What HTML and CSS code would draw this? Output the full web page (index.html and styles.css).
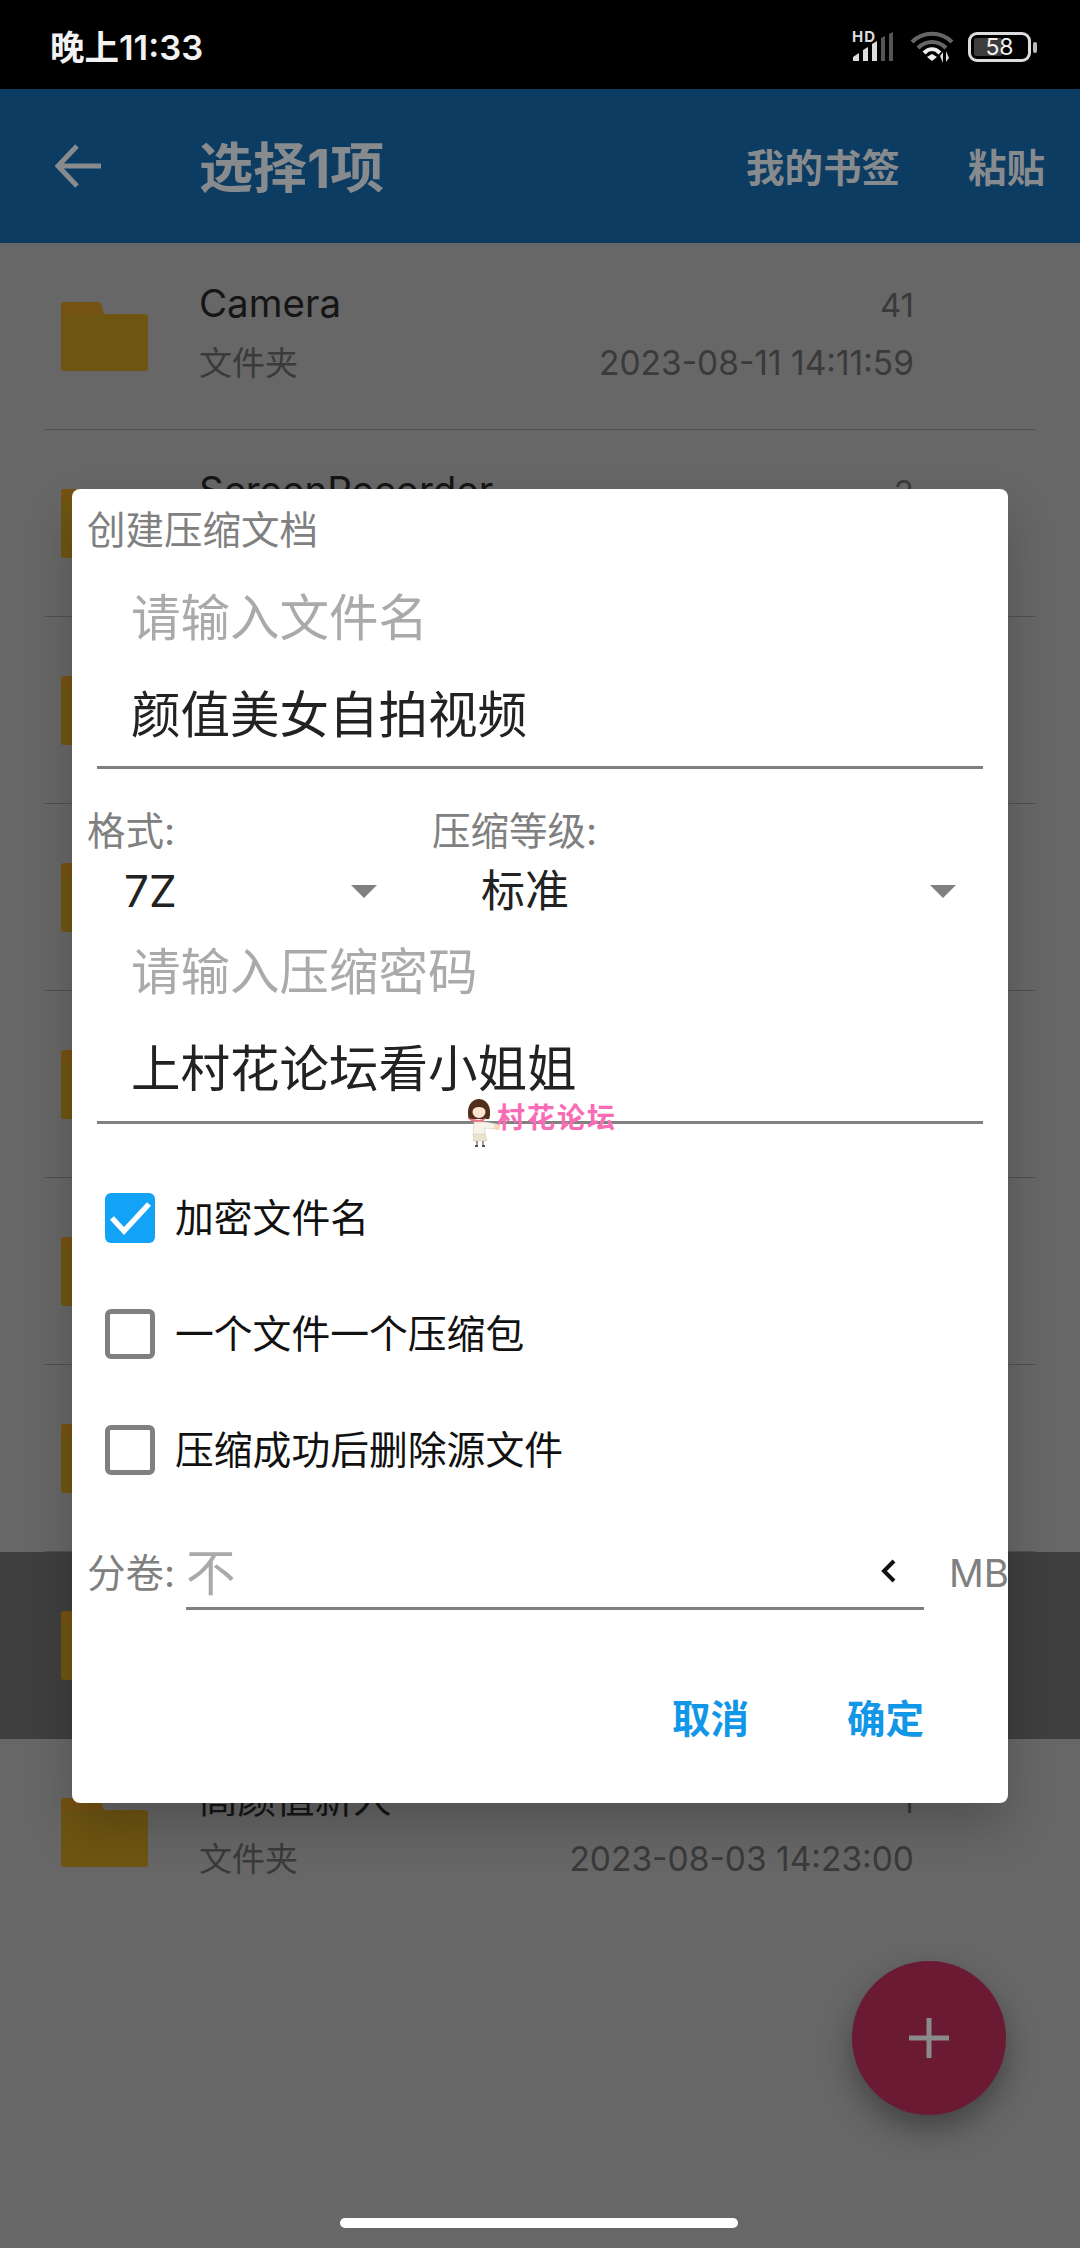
FILE: index.html
```html
<!DOCTYPE html>
<html lang="zh-CN">
<head>
<meta charset="utf-8">
<title>创建压缩文档</title>
<link rel="stylesheet" href="styles.css">
</head>
<body>
<div class="screen">
  <div class="status">
    <span class="time">晚上11:33</span>
    <div class="status-icons">
      <svg class="ic-signal" width="42" height="32" viewBox="0 0 42 32">
        <text x="0" y="11" class="hd">HD</text>
        <path d="M1 30v-4l6-4v8z" fill="#ddd"/>
        <path d="M11 30V19l5-3v14z" fill="#ddd"/>
        <path d="M20 30V13l5-3v20z" fill="#ddd"/>
        <path d="M29 30V7l4-2v25z" fill="#555"/>
        <path d="M37 30V3l4-2v29z" fill="#555"/>
      </svg>
      <svg class="ic-wifi" width="44" height="32" viewBox="0 0 44 32">
        <path d="M2 11C13 0 31 0 42 11" fill="none" stroke="#666" stroke-width="4"/>
        <path d="M8 17c8-8 20-8 28 0" fill="none" stroke="#666" stroke-width="4"/>
        <path d="M14 22c5-5 11-5 16 0" fill="none" stroke="#eee" stroke-width="4"/>
        <path d="M17 26l5-3 5 3-5 4z" fill="#eee"/>
        <path d="M33 32V21l-3 4zM36 20v11l3-4z" fill="#ddd"/>
      </svg>
      <div class="battery">
        <div class="battery-body"><span class="battery-fill"></span><span class="battery-num">58</span></div>
        <span class="battery-nub"></span>
      </div>
    </div>
  </div>

  <header class="appbar">
    <svg class="back" width="46" height="44" viewBox="0 0 46 44"><path d="M22 2L3 22l19 20M3 22h43" fill="none" stroke="#878b8e" stroke-width="5"/></svg>
    <span class="appbar-title">选择1项</span>
    <span class="appbar-action">我的书签</span>
    <span class="appbar-action appbar-action-last">粘贴</span>
  </header>

  <main class="list">
    <div class="row">
      <svg class="folder" width="87" height="69" viewBox="0 0 87 69"><path d="M0 3a3 3 0 0 1 3-3h34a3 3 0 0 1 3 2l3 10H0z" fill="#755212"/><path d="M0 12h84a3 3 0 0 1 3 3v51a3 3 0 0 1-3 3H3a3 3 0 0 1-3-3z" fill="#6e5512"/></svg>
      <div class="row-main"><div class="name">Camera</div><div class="kind">文件夹</div></div>
      <div class="row-side"><div class="count">41</div><div class="date">2023-08-11 14:11:59</div></div>
      <div class="dots"><i></i><i></i><i></i></div>
    </div>
    <div class="row">
      <svg class="folder" width="87" height="69" viewBox="0 0 87 69"><path d="M0 3a3 3 0 0 1 3-3h34a3 3 0 0 1 3 2l3 10H0z" fill="#755212"/><path d="M0 12h84a3 3 0 0 1 3 3v51a3 3 0 0 1-3 3H3a3 3 0 0 1-3-3z" fill="#6e5512"/></svg>
      <div class="row-main"><div class="name">ScreenRecorder</div><div class="kind">文件夹</div></div>
      <div class="row-side"><div class="count">2</div><div class="date"></div></div>
      <div class="dots"><i></i><i></i><i></i></div>
    </div>
    <div class="row">
      <svg class="folder" width="87" height="69" viewBox="0 0 87 69"><path d="M0 3a3 3 0 0 1 3-3h34a3 3 0 0 1 3 2l3 10H0z" fill="#755212"/><path d="M0 12h84a3 3 0 0 1 3 3v51a3 3 0 0 1-3 3H3a3 3 0 0 1-3-3z" fill="#6e5512"/></svg>
      <div class="row-main"></div><div class="row-side"></div>
      <div class="dots"><i></i><i></i><i></i></div>
    </div>
    <div class="row">
      <svg class="folder" width="87" height="69" viewBox="0 0 87 69"><path d="M0 3a3 3 0 0 1 3-3h34a3 3 0 0 1 3 2l3 10H0z" fill="#755212"/><path d="M0 12h84a3 3 0 0 1 3 3v51a3 3 0 0 1-3 3H3a3 3 0 0 1-3-3z" fill="#6e5512"/></svg>
      <div class="row-main"></div><div class="row-side"></div>
      <div class="dots"><i></i><i></i><i></i></div>
    </div>
    <div class="row">
      <svg class="folder" width="87" height="69" viewBox="0 0 87 69"><path d="M0 3a3 3 0 0 1 3-3h34a3 3 0 0 1 3 2l3 10H0z" fill="#755212"/><path d="M0 12h84a3 3 0 0 1 3 3v51a3 3 0 0 1-3 3H3a3 3 0 0 1-3-3z" fill="#6e5512"/></svg>
      <div class="row-main"></div><div class="row-side"></div>
      <div class="dots"><i></i><i></i><i></i></div>
    </div>
    <div class="row">
      <svg class="folder" width="87" height="69" viewBox="0 0 87 69"><path d="M0 3a3 3 0 0 1 3-3h34a3 3 0 0 1 3 2l3 10H0z" fill="#755212"/><path d="M0 12h84a3 3 0 0 1 3 3v51a3 3 0 0 1-3 3H3a3 3 0 0 1-3-3z" fill="#6e5512"/></svg>
      <div class="row-main"></div><div class="row-side"></div>
      <div class="dots"><i></i><i></i><i></i></div>
    </div>
    <div class="row">
      <svg class="folder" width="87" height="69" viewBox="0 0 87 69"><path d="M0 3a3 3 0 0 1 3-3h34a3 3 0 0 1 3 2l3 10H0z" fill="#755212"/><path d="M0 12h84a3 3 0 0 1 3 3v51a3 3 0 0 1-3 3H3a3 3 0 0 1-3-3z" fill="#6e5512"/></svg>
      <div class="row-main"></div><div class="row-side"></div>
      <div class="dots"><i></i><i></i><i></i></div>
    </div>
    <div class="row row-selected">
      <svg class="folder" width="87" height="69" viewBox="0 0 87 69"><path d="M0 3a3 3 0 0 1 3-3h34a3 3 0 0 1 3 2l3 10H0z" fill="#755212"/><path d="M0 12h84a3 3 0 0 1 3 3v51a3 3 0 0 1-3 3H3a3 3 0 0 1-3-3z" fill="#6e5512"/></svg>
      <div class="row-main"></div><div class="row-side"></div>
      <div class="dots"><i></i><i></i><i></i></div>
    </div>
    <div class="row row-last">
      <svg class="folder" width="87" height="69" viewBox="0 0 87 69"><path d="M0 3a3 3 0 0 1 3-3h34a3 3 0 0 1 3 2l3 10H0z" fill="#755212"/><path d="M0 12h84a3 3 0 0 1 3 3v51a3 3 0 0 1-3 3H3a3 3 0 0 1-3-3z" fill="#6e5512"/></svg>
      <div class="row-main"><div class="name">高颜值新人</div><div class="kind">文件夹</div></div>
      <div class="row-side"><div class="count">1</div><div class="date">2023-08-03 14:23:00</div></div>
      <div class="dots"><i></i><i></i><i></i></div>
    </div>
  </main>

  <button class="fab"><svg width="40" height="40" viewBox="0 0 40 40"><path d="M20 0v40M0 20h40" stroke="#8a8a8a" stroke-width="5"/></svg></button>
  <div class="home-handle"></div>

  <section class="dialog">
    <h1 class="dlg-title">创建压缩文档</h1>

    <div class="field field-name">
      <div class="ph">请输入文件名</div>
      <div class="val">颜值美女自拍视频</div>
    </div>

    <div class="formats">
      <div class="fmt fmt-a">
        <div class="fmt-label">格式:</div>
        <div class="spin"><span>7Z</span><svg width="26" height="13" viewBox="0 0 26 13"><path d="M0 0h26L13 13z" fill="#808080"/></svg></div>
      </div>
      <div class="fmt fmt-b">
        <div class="fmt-label">压缩等级:</div>
        <div class="spin"><span>标准</span><svg width="26" height="13" viewBox="0 0 26 13"><path d="M0 0h26L13 13z" fill="#808080"/></svg></div>
      </div>
    </div>

    <div class="field field-pass">
      <div class="ph">请输入压缩密码</div>
      <div class="val">上村花论坛看小姐姐</div>
      <div class="mark">
        <svg width="34" height="48" viewBox="0 0 34 48">
          <path d="M1 13C1 4 7 0 12 0s11 4 11 13c0 3 0 5-1 7H2c-1-2-1-4-1-7z" fill="#4f2f1a"/>
          <ellipse cx="12" cy="13" rx="6.500" ry="6" fill="#fbe3cf"/>
          <path d="M5 11c3-4 11-4 14 0V5l-7-3-7 3z" fill="#4f2f1a"/>
          <path d="M0 19l12 2 7-2-5 6-8-2z" fill="#ea6f80"/>
          <path d="M7 23h11l12 2v5l-12-1v8H6z" fill="#f6f3ea" stroke="#cfc8ba" stroke-width=".6"/>
          <path d="M7 35h11l2 7H6z" fill="#ece2d4" stroke="#d3c9ba" stroke-width=".5"/>
          <path d="M10 42v4M16 42v4" stroke="#8b7a6c" stroke-width="1.500"/>
          <path d="M8 46h3v2H8zM15 46h3v2h-3z" fill="#5a4a40"/>
          <rect x="27" y="25" width="6" height="6" rx="2" fill="#f5d9bd"/>
        </svg>
        <span>村花论坛</span>
      </div>
    </div>

    <div class="checks">
      <label class="check"><span class="box box-on"><svg width="50" height="50" viewBox="0 0 50 50"><path d="M7 25l12 13L44 11" fill="none" stroke="#fff" stroke-width="5.500"/></svg></span><span class="check-text">加密文件名</span></label>
      <label class="check"><span class="box"></span><span class="check-text">一个文件一个压缩包</span></label>
      <label class="check"><span class="box"></span><span class="check-text">压缩成功后删除源文件</span></label>
    </div>

    <div class="split">
      <span class="split-label">分卷:</span>
      <div class="split-input">
        <span class="split-val">不</span>
        <svg class="split-chev" width="16" height="24" viewBox="0 0 16 24"><path d="M13 2L3 12l10 10" fill="none" stroke="#111" stroke-width="4"/></svg>
      </div>
      <span class="split-unit">MB</span>
    </div>

    <div class="actions">
      <span class="act">取消</span>
      <span class="act">确定</span>
    </div>
  </section>
</div>
</body>
</html>
```

FILE: styles.css
```css
* { box-sizing: border-box; }
html, body { margin: 0; padding: 0; }
body {
  width: 1080px;
  height: 2248px;
  overflow: hidden;
  font-family: "Inter", "Noto Sans CJK SC", sans-serif;
  background: #676767;
}
.screen { position: relative; width: 1080px; height: 2248px; overflow: hidden; background: #676767; }

.status {
  height: 89px;
  background: #000;
  display: flex;
  align-items: center;
  justify-content: space-between;
  padding: 0 43px 0 50px;
}
.time { color: #f2f2f2; font-size: 34.500px; font-weight: 600; line-height: 40px; margin-top: 6px; white-space: nowrap; }
.status-icons { display: flex; align-items: center; margin-top: 5px; }
.ic-signal { display: block; margin-right: 16px; overflow: visible; }
.hd { font: 700 15px "Inter", sans-serif; fill: #ddd; letter-spacing: 1px; }
.ic-wifi { display: block; margin-right: 14px; }
.battery { display: flex; align-items: center; gap: 2px; }
.battery-body {
  position: relative;
  width: 63px;
  height: 30px;
  border: 3.500px solid #dcdcdc;
  border-radius: 9px;
  display: flex;
  align-items: center;
  justify-content: center;
}
.battery-fill { position: absolute; left: 3px; top: 3px; bottom: 3px; width: 28px; background: #3d3d3d; border-radius: 2px; }
.battery-num { position: relative; color: #f2f2f2; font-size: 23px; line-height: 24px; }
.battery-nub { width: 4px; height: 11px; background: #bbb; border-radius: 2px; }

.appbar {
  height: 154px;
  background: #0d3c63;
  display: flex;
  align-items: center;
  padding: 0 35px 0 55px;
  color: #878b8e;
}
.back { flex: none; margin-right: 98px; }
.appbar-title { font-size: 54px; font-weight: 700; line-height: 60px; flex: 1; margin-top: 5px; }
.appbar-action { font-size: 38.500px; font-weight: 700; line-height: 50px; margin-left: 68px; margin-top: 3px; }

.row {
  height: 187px;
  position: relative;
  display: flex;
  padding-left: 61px;
}
.row::after {
  content: "";
  position: absolute;
  left: 45px;
  right: 45px;
  bottom: 0;
  height: 1px;
  background: #505050;
}
.row-selected { background: #3f3f3f; }
.row-selected::after { background: #3f3f3f; }
.row-last::after { display: none; }
.folder { flex: none; margin-top: 59px; margin-right: 51px; }
.row-main { flex: 1; padding-top: 36px; }
.row-side { width: 400px; padding-top: 36px; text-align: right; margin-right: 166px; }
.name { font-size: 38.500px; line-height: 48px; color: #151515; height: 48px; }
.kind { font-size: 33px; line-height: 44px; color: #3a3a3a; margin-top: 14px; height: 44px; }
.count { font-size: 33px; line-height: 52px; color: #3a3a3a; height: 48px; }
.date { font-size: 33.500px; line-height: 44px; color: #3a3a3a; margin-top: 14px; height: 44px; }
.dots {
  width: 166px;
  margin-top: 67px;
  display: flex;
  flex-direction: column;
  align-items: center;
  flex: none;
  gap: 12px;
  margin-left: -166px;
  transform: translateX(105px);
  height: 52px;
}
.dots i { display: block; width: 9px; height: 9px; border-radius: 50%; background: #3c3c3c; flex: none; }

.fab {
  position: absolute;
  left: 852px;
  top: 1961px;
  width: 154px;
  height: 154px;
  border: 0;
  padding: 0;
  border-radius: 50%;
  background: #6b1a33;
  box-shadow: 0 14px 30px rgba(0, 0, 0, .35);
  display: flex;
  align-items: center;
  justify-content: center;
}
.home-handle { position: absolute; left: 340px; top: 2218px; width: 398px; height: 10px; border-radius: 5px; background: #fff; }

.dialog {
  position: absolute;
  left: 72px;
  top: 489px;
  width: 936px;
  height: 1314px;
  background: #fff;
  border-radius: 8px;
  padding-top: 16px;
  box-shadow: 0 24px 48px rgba(0, 0, 0, .2);
}
.dlg-title { margin: 0; padding-left: 15px; font-size: 38.500px; font-weight: 400; line-height: 50px; color: #808080; height: 50px; }

.field { position: relative; margin: 0 25px; border-bottom: 3px solid #808080; padding-left: 34px; }
.field-name { margin-top: 29px; padding-bottom: 17px; }
.field-pass { margin-top: 17px; padding-bottom: 18px; }
.ph { font-size: 49.500px; line-height: 68px; color: #aaa; height: 68px; }
.val { font-size: 49.500px; line-height: 68px; color: #222; margin-top: 29px; height: 68px; }

.formats { display: flex; margin-top: 37px; }
.fmt-label { font-size: 38.500px; line-height: 50px; color: #808080; }
.fmt-a { width: 360px; padding-left: 15px; }
.fmt-b { flex: 1; }
.spin { display: flex; align-items: center; justify-content: space-between; height: 60px; margin-top: 5px; font-size: 44px; line-height: 60px; color: #222; }
.fmt-a .spin { padding: 0 55px 0 37px; }
.fmt-b .spin { padding: 0 52px 0 49px; }

.mark { position: absolute; left: 370px; top: 161px; display: flex; color: #f76cb5; }
.mark svg { display: block; flex: none; }
.mark span { font-size: 28px; font-weight: 700; line-height: 32px; letter-spacing: 2px; margin-left: -4px; margin-top: 3px; white-space: nowrap; }

.checks { margin-top: 36px; }
.check { display: flex; align-items: center; height: 116px; padding-left: 33px; font-size: 38.800px; color: #111; }
.check-text { line-height: 50px; }
.box { flex: none; width: 50px; height: 50px; margin-right: 20px; border: 5px solid #808080; border-radius: 6px; display: flex; align-items: center; justify-content: center; }
.box-on { background: #12a2f6; border: 0; }

.split { display: flex; align-items: flex-end; margin-top: 34px; padding-left: 15px; overflow: hidden; }
.split-label { font-size: 38.500px; line-height: 50px; color: #808080; width: 99px; margin-bottom: 12px; flex: none; }
.split-input { width: 738px; height: 68px; border-bottom: 3px solid #808080; display: flex; align-items: center; justify-content: space-between; padding: 0 27px 4px 0; flex: none; }
.split-val { font-size: 49.500px; line-height: 62px; color: #aaa; }
.split-chev { margin-bottom: 4px; }
.split-unit { font-size: 38.500px; line-height: 50px; color: #808080; margin-left: 25px; margin-bottom: 12px; flex: none; white-space: nowrap; }

.actions { display: flex; justify-content: flex-end; gap: 98px; margin-top: 84px; padding-right: 84px; }
.act { font-size: 38.500px; font-weight: 700; line-height: 50px; color: #1296e8; }
```
